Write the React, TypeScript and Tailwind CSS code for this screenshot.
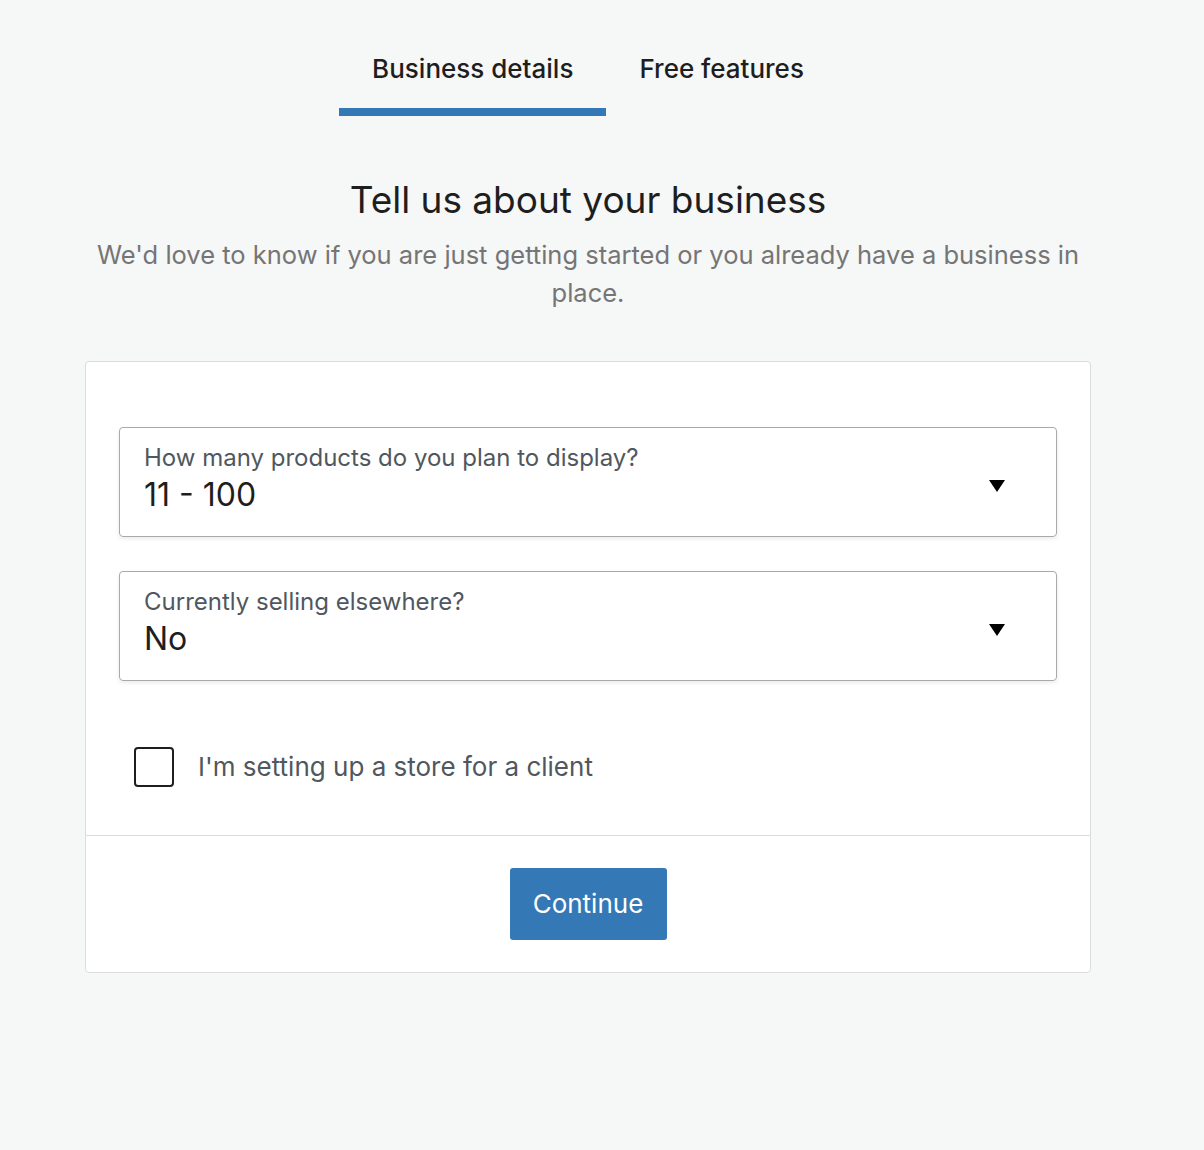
export default function App() {
  return (
    <div className="min-h-[1150px] w-full bg-[#f6f7f7] font-['Inter','Noto_Sans',sans-serif]">
      <div className="w-[1176px] flex flex-col items-center">
        {/* Tabs */}
        <div className="flex pt-[52px]">
          <div className="flex flex-col">
            <span className="px-[33px] text-[26px] leading-[34px] font-medium text-[#1e1e1e]">Business details</span>
            <div className="mt-[22px] h-[8px] bg-[#3479b6]" />
          </div>
          <div className="flex flex-col">
            <span className="px-[33px] text-[26px] leading-[34px] font-medium text-[#1e1e1e]">Free features</span>
          </div>
        </div>

        <h1 className="mt-[62px] text-[37px] leading-[44px] text-[#1e1e1e]">Tell us about your business</h1>
        <p className="mt-[14px] w-[1000px] text-center text-[25.5px] leading-[38px] text-[#757575]">
          We'd love to know if you are just getting started or you already have a business in place.
        </p>

        {/* Card */}
        <div className="mt-[49px] w-[1006px] bg-white border border-[#dcdcde] rounded-[4px] flex flex-col">
          <div className="px-[33px] pt-[65px] pb-[48px] flex flex-col">
            <Select label="How many products do you plan to display?" value="11 - 100" />
            <div className="h-[34px]" />
            <Select label="Currently selling elsewhere?" value="No" />
            <label className="mt-[66px] ml-[15px] flex items-center gap-[24px]">
              <span className="w-[40px] h-[40px] border-2 border-[#1e1e1e] rounded-[4px] bg-white" />
              <span className="text-[26px] leading-[34px] text-[#50575e]">I'm setting up a store for a client</span>
            </label>
          </div>
          <div className="border-t border-[#dcdcde] flex justify-center pt-[32px] pb-[32px]">
            <button className="w-[157px] h-[72px] bg-[#3479b6] rounded-[3px] text-white text-[26px] leading-[34px]">Continue</button>
          </div>
        </div>
      </div>
    </div>
  );
}

function Select({ label, value }: { label: string; value: string }) {
  return (
    <div className="h-[110px] border-[1.5px] border-[#a7aaad] rounded-[4px] shadow-[0_2px_4px_rgba(0,0,0,0.08)] flex items-center justify-between pl-[24px] pr-[51px]">
      <div className="flex flex-col self-start pt-[14px]">
        <span className="text-[24px] leading-[32px] text-[#50575e]">{label}</span>
        <span className="mt-[2px] text-[32px] leading-[38px] text-[#1e1e1e]">{value}</span>
      </div>
      <svg width="16" height="12" viewBox="0 0 16 12" className="mt-[8px]">
        <path d="M0 0 H16 L8 12 Z" fill="#000" />
      </svg>
    </div>
  );
}
